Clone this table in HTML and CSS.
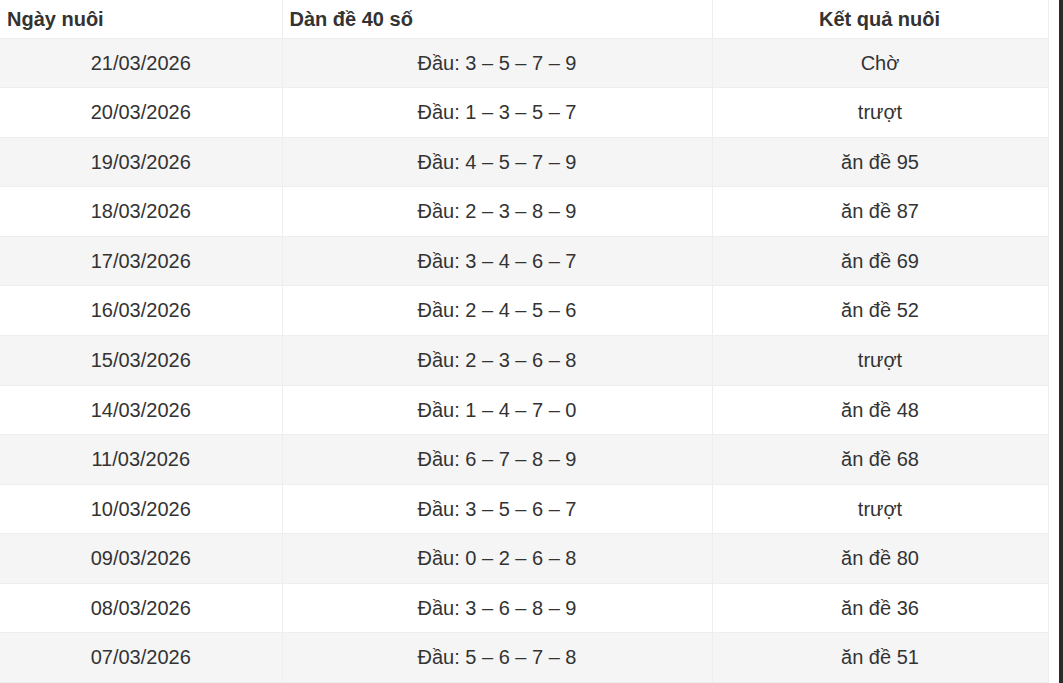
FILE: index.html
```html
<!DOCTYPE html>
<html lang="vi">
<head>
<meta charset="utf-8">
<title>Dàn đề 40 số</title>
<link rel="stylesheet" href="styles.css">
</head>
<body>
<div class="page">
  <div class="content">
    <table class="results">
      <colgroup>
        <col class="c1"><col class="c2"><col class="c3">
      </colgroup>
      <thead>
        <tr>
          <th class="left">Ngày nuôi</th>
          <th class="left">Dàn đề 40 số</th>
          <th class="center">Kết quả nuôi</th>
        </tr>
      </thead>
      <tbody>
        <tr><td>21/03/2026</td><td>Đầu: 3 – 5 – 7 – 9</td><td>Chờ</td></tr>
        <tr><td>20/03/2026</td><td>Đầu: 1 – 3 – 5 – 7</td><td>trượt</td></tr>
        <tr><td>19/03/2026</td><td>Đầu: 4 – 5 – 7 – 9</td><td>ăn đề 95</td></tr>
        <tr><td>18/03/2026</td><td>Đầu: 2 – 3 – 8 – 9</td><td>ăn đề 87</td></tr>
        <tr><td>17/03/2026</td><td>Đầu: 3 – 4 – 6 – 7</td><td>ăn đề 69</td></tr>
        <tr><td>16/03/2026</td><td>Đầu: 2 – 4 – 5 – 6</td><td>ăn đề 52</td></tr>
        <tr><td>15/03/2026</td><td>Đầu: 2 – 3 – 6 – 8</td><td>trượt</td></tr>
        <tr><td>14/03/2026</td><td>Đầu: 1 – 4 – 7 – 0</td><td>ăn đề 48</td></tr>
        <tr><td>11/03/2026</td><td>Đầu: 6 – 7 – 8 – 9</td><td>ăn đề 68</td></tr>
        <tr><td>10/03/2026</td><td>Đầu: 3 – 5 – 6 – 7</td><td>trượt</td></tr>
        <tr><td>09/03/2026</td><td>Đầu: 0 – 2 – 6 – 8</td><td>ăn đề 80</td></tr>
        <tr><td>08/03/2026</td><td>Đầu: 3 – 6 – 8 – 9</td><td>ăn đề 36</td></tr>
        <tr><td>07/03/2026</td><td>Đầu: 5 – 6 – 7 – 8</td><td>ăn đề 51</td></tr>
      </tbody>
    </table>
  </div>
  <div class="scroll-edge"></div>
</div>
</body>
</html>
```

FILE: styles.css
```css
html, body {
  margin: 0;
  padding: 0;
  background: #fff;
}

body {
  font-family: "Liberation Sans", Arial, sans-serif;
  color: #333;
  overflow: hidden;
}

.page {
  display: flex;
  width: 1063px;
  height: 683px;
  overflow: hidden;
}

.content {
  flex: 0 0 1049px;
}

.scroll-edge {
  flex: 0 0 4px;
  margin-left: auto;
  background: #2b2b2b;
}

.results {
  width: 1048px;
  border-collapse: collapse;
  table-layout: fixed;
  font-size: 20px;
  line-height: 1.42857;
}

.c1 { width: 282px; }
.c2 { width: 430px; }
.c3 { width: 336px; }

.results th,
.results td {
  border: 1px solid #eee;
}

.results tr > :first-child {
  border-left: none;
}

.results tr:first-child > th {
  border-top: none;
}

.results th {
  font-weight: bold;
  padding: 5px 8px 4px 7px;
  vertical-align: bottom;
}

.results th.left { text-align: left; }
.results th.center { text-align: center; }

.results td {
  padding: 10px 8px;
  text-align: center;
  vertical-align: top;
}

.results tbody tr:nth-child(odd) {
  background: #f5f5f5;
}
```
